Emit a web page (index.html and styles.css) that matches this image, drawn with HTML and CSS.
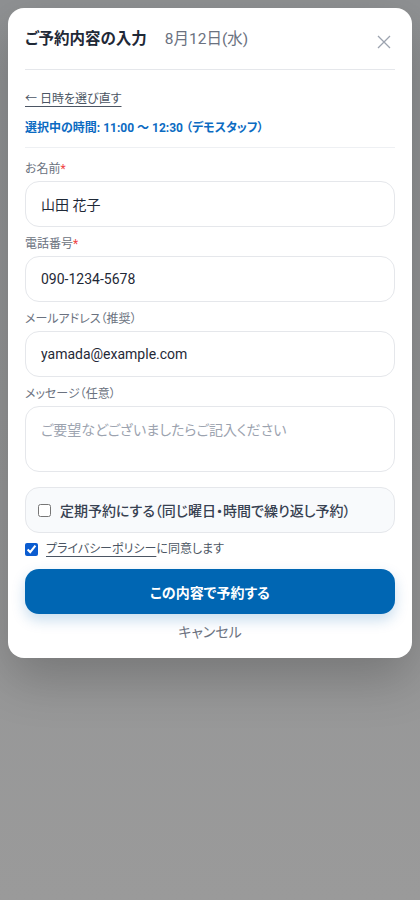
FILE: index.html
```html
<!DOCTYPE html>
<html lang="ja">
<head>
<meta charset="utf-8">
<title>ご予約内容の入力</title>
<link rel="stylesheet" href="styles.css">
</head>
<body>
<div class="modal">
  <div class="header">
    <div class="title-group">
      <h1 class="title">ご予約内容の入力</h1>
      <span class="date">8月12日(水)</span>
    </div>
    <button class="close" aria-label="閉じる">
      <svg width="14" height="14" viewBox="0 0 14 14"><path d="M1 1L13 13M13 1L1 13" stroke="#9ca3af" stroke-width="1.3" fill="none"/></svg>
    </button>
  </div>
  <div class="selected">
    <a class="back" href="#">← 日時を選び直す</a>
    <div class="time">選択中の時間: 11:00 〜 12:30 （デモスタッフ）</div>
  </div>
  <form class="form">
    <div class="field">
      <label class="label">お名前<span class="req">*</span></label>
      <div class="input">山田 花子</div>
    </div>
    <div class="field">
      <label class="label">電話番号<span class="req">*</span></label>
      <div class="input">090-1234-5678</div>
    </div>
    <div class="field">
      <label class="label">メールアドレス（推奨）</label>
      <div class="input">yamada@example.com</div>
    </div>
    <div class="field">
      <label class="label">メッセージ（任意）</label>
      <div class="input textarea placeholder">ご要望などございましたらご記入ください</div>
    </div>
    <label class="repeat">
      <input type="checkbox" class="cb">
      <span>定期予約にする（同じ曜日・時間で繰り返し予約）</span>
    </label>
    <label class="agree">
      <input type="checkbox" class="cb checked" checked>
      <span><span class="policy">プライバシーポリシー</span>に同意します</span>
    </label>
    <button type="button" class="submit">この内容で予約する</button>
    <div class="cancel">キャンセル</div>
  </form>
</div>
</body>
</html>
```
FILE: styles.css
```css
* { box-sizing: border-box; }
html, body { margin: 0; padding: 0; }
body {
  width: 420px;
  height: 900px;
  background: linear-gradient(#8f9193, #9a9a9a);
  font-family: Roboto, "Noto Sans CJK JP", sans-serif;
  font-feature-settings: "palt";
  color: #1f2937;
  padding: 8px;
}
.modal {
  width: 404px;
  background: #fff;
  border-radius: 16px;
  padding: 0 17px 16px;
  box-shadow: 0 20px 50px rgba(0, 0, 0, 0.22);
}
.header {
  height: 62px;
  display: flex;
  align-items: center;
  justify-content: space-between;
  border-bottom: 1px solid #e5e7eb;
  padding-top: 1px;
}
.title-group { display: flex; align-items: baseline; gap: 18px; }
.title {
  margin: 0;
  font-size: 15.5px;
  font-weight: 700;
  color: #1f2937;
  line-height: 24px;
}
.date { font-size: 15.5px; color: #6b7280; line-height: 24px; }
.close {
  border: 0;
  background: none;
  padding: 0;
  margin-right: 4px;
  margin-top: 5px;
  width: 14px;
  height: 14px;
  display: flex;
}
.selected {
  padding: 19px 0 9px;
  border-bottom: 1px solid #eef0f3;
}
.back {
  display: block;
  font-size: 12px;
  line-height: 20px;
  color: #4b5563;
  text-decoration: underline;
  text-underline-offset: 3px;
  margin-bottom: 9px;
}
.time {
  font-size: 12px;
  line-height: 20px;
  font-weight: 700;
  color: #0b6bc2;
}
.form { padding-top: 13px; display: flex; flex-direction: column; }
.field { display: flex; flex-direction: column; margin-bottom: 9px; }
.label {
  font-size: 12px;
  line-height: 16px;
  color: #6b7280;
  margin-bottom: 4px;
}
.req { color: #ef4444; }
.input {
  height: 46px;
  border: 1px solid #e5e7eb;
  border-radius: 14px;
  padding: 0 15px;
  display: flex;
  align-items: center;
  font-size: 14px;
  color: #1f2937;
}
.textarea {
  height: 66px;
  align-items: flex-start;
  padding-top: 11px;
  line-height: 24px;
}
.placeholder { color: #9ca3af; }
.repeat {
  margin-top: 6px;
  height: 46px;
  background: #f8fafc;
  border: 1px solid #e5e7eb;
  border-radius: 14px;
  display: flex;
  align-items: center;
  padding-left: 12px;
  gap: 9px;
  font-size: 14px;
  font-weight: 500;
  color: #374151;
}
.cb { margin: 0; width: 13px; height: 13px; accent-color: #0b5cd0; }
.agree {
  margin-top: 8px;
  display: flex;
  align-items: center;
  gap: 8px;
  font-size: 12px;
  line-height: 16px;
  color: #4b5563;
}
.policy { text-decoration: underline; text-underline-offset: 3px; }
.submit {
  margin-top: 12px;
  height: 45px;
  border: 0;
  border-radius: 14px;
  background: #0066b3;
  color: #fff;
  font-family: inherit;
  font-feature-settings: "palt";
  font-size: 14px;
  font-weight: 700;
  box-shadow: 0 6px 14px rgba(0, 102, 179, 0.22);
}
.cancel {
  margin-top: 8px;
  text-align: center;
  font-size: 14px;
  line-height: 20px;
  color: #6b7280;
}
```
